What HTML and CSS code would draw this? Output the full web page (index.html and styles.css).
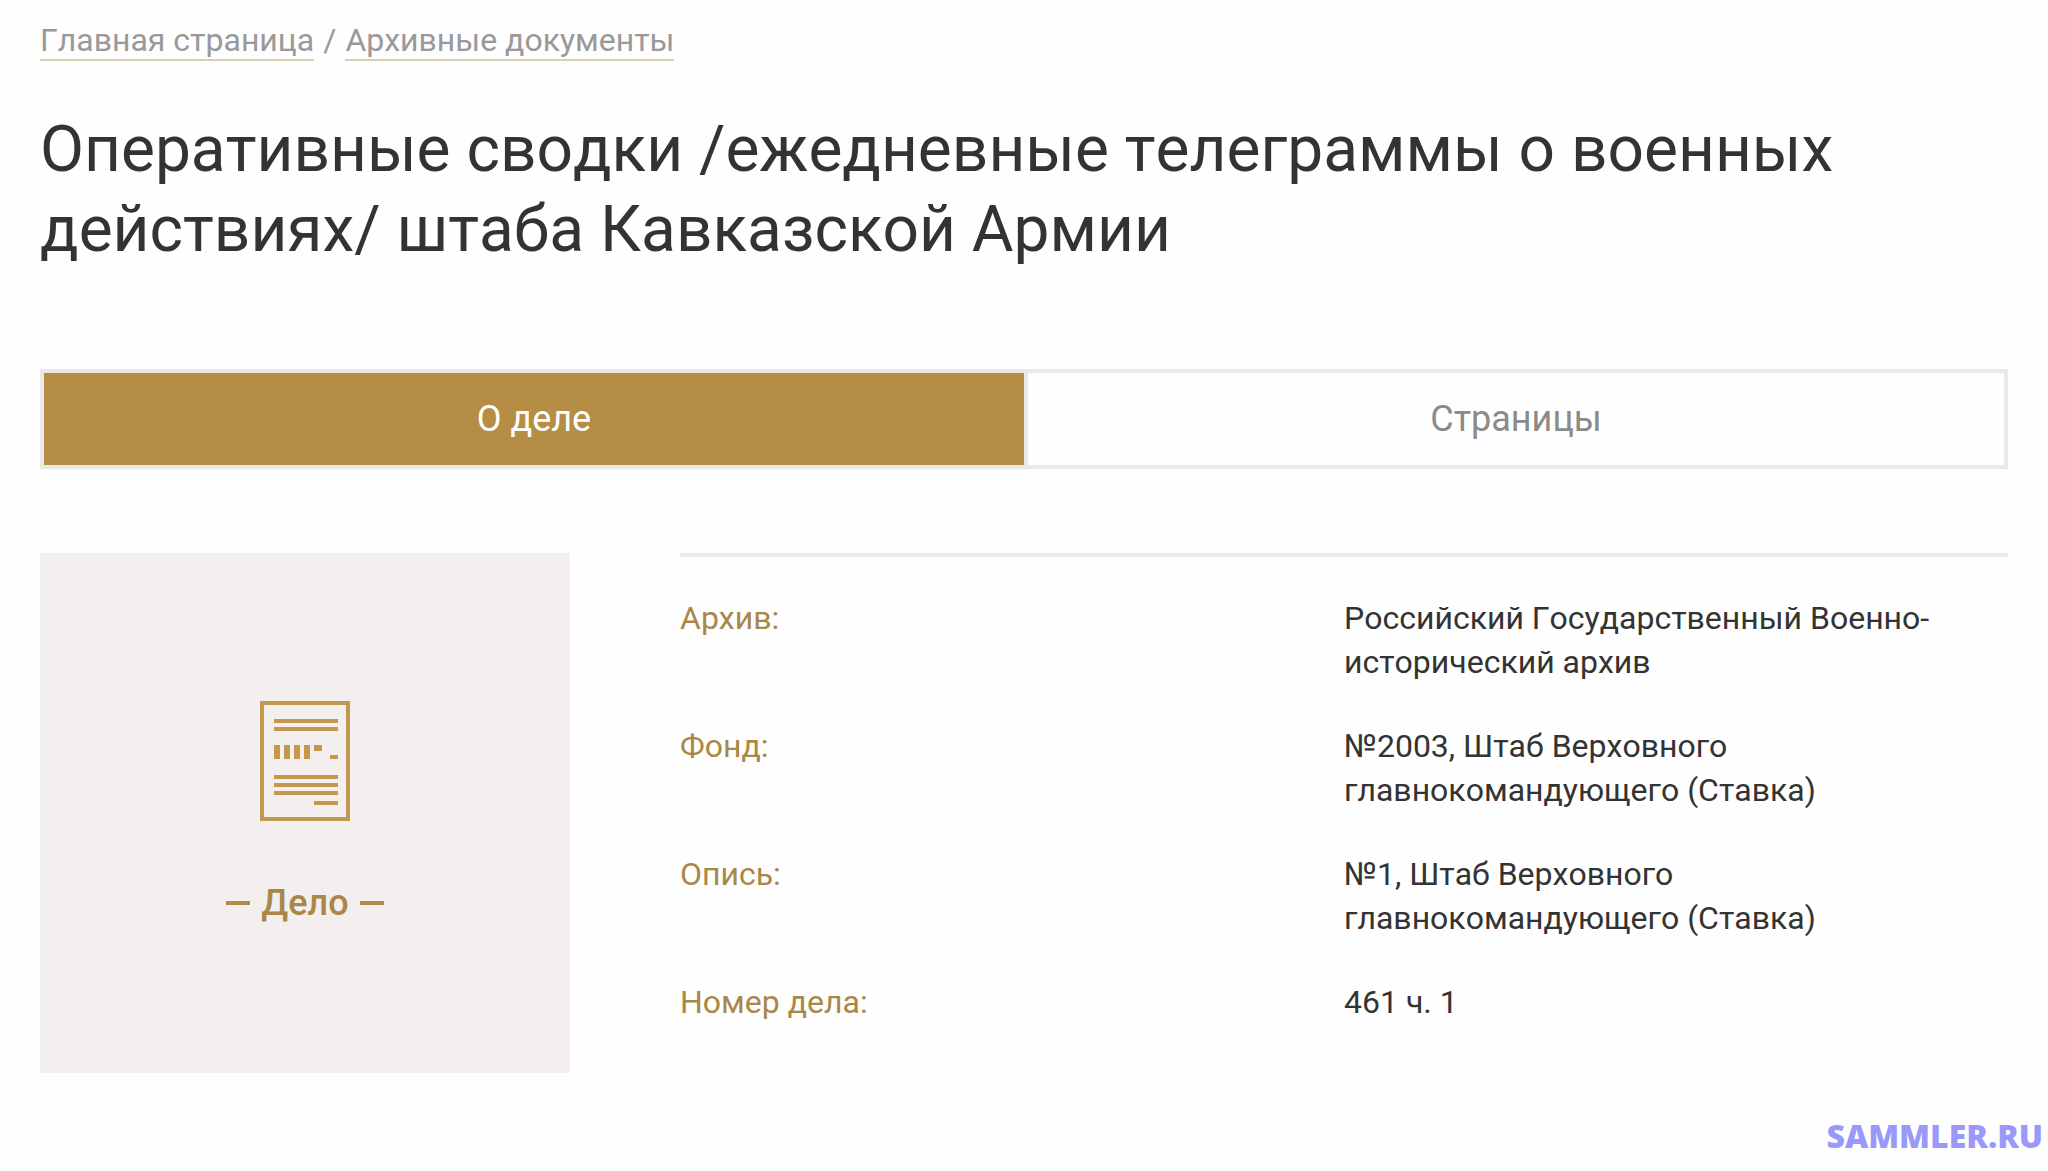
FILE: index.html
```html
<!DOCTYPE html>
<html lang="ru">

<head>
  <meta charset="UTF-8">
  <meta name="viewport" content="width=device-width, initial-scale=1.0">
  <title>Оперативные сводки</title>
  <link rel="stylesheet" href="styles.css">
</head>

<body>
  <main class="page">
    <nav class="breadcrumbs">
      <a href="#">Главная страница</a>
      <span>/</span>
      <a href="#">Архивные документы</a>
    </nav>

    <h1 class="title">Оперативные сводки /ежедневные телеграммы о военных действиях/ штаба Кавказской Армии</h1>

    <div class="tabs">
      <button type="button" class="tab tab-active">О деле</button>
      <button type="button" class="tab">Страницы</button>
    </div>

    <div class="content">
      <div class="card">
        <svg class="card-icon" viewBox="0 0 90 120" aria-hidden="true">
          <rect x="2" y="2" width="86" height="116" fill="none" stroke="#c19850" stroke-width="4" />
          <g fill="#c5974a">
            <rect x="14" y="18" width="64" height="4" />
            <rect x="14" y="26" width="64" height="4" />
            <rect x="14" y="44" width="6" height="14" />
            <rect x="24" y="44" width="6" height="14" />
            <rect x="34" y="44" width="6" height="14" />
            <rect x="44" y="44" width="6" height="14" />
            <rect x="54" y="44" width="8" height="6" />
            <rect x="70" y="54" width="8" height="4" />
            <rect x="14" y="74" width="64" height="4" />
            <rect x="14" y="82" width="64" height="4" />
            <rect x="14" y="90" width="64" height="4" />
            <rect x="54" y="100" width="24" height="4" />
          </g>
        </svg>
        <div class="card-label">Дело</div>
      </div>

      <dl class="info">
        <dt>Архив:</dt>
        <dd>Российский Государственный Военно-исторический архив</dd>
        <dt>Фонд:</dt>
        <dd>№2003, Штаб Верховного главнокомандующего (Ставка)</dd>
        <dt>Опись:</dt>
        <dd>№1, Штаб Верховного главнокомандующего (Ставка)</dd>
        <dt>Номер дела:</dt>
        <dd>461 ч. 1</dd>
      </dl>
    </div>
  </main>
  <footer class="watermark">SAMMLER.RU</footer>
</body>

</html>
```
FILE: styles.css
```css
* {
  box-sizing: border-box;
}

body {
  margin: 0;
  background-color: #fefefe;
  color: #333;
  font-family: Roboto, sans-serif;
  font-size: 32px;
  font-kerning: none;
  line-height: 44px;
}

.page {
  padding: 20px 40px 0;
}

.breadcrumbs {
  display: flex;
  gap: 9px;
  line-height: 40px;
  color: #999;
}

.breadcrumbs a {
  height: 41px;
  color: #999;
  text-decoration: none;
  border-bottom: 2px solid #d5d1b2;
}

.title {
  margin: 49px 0 99px;
  font-size: 64px;
  font-weight: 400;
  line-height: 80px;
}

.tabs {
  display: flex;
  border: 4px solid #eae9e9;
}

.tab {
  width: 50%;
  padding: 24px;
  border: 0;
  background-color: #fefefe;
  color: #8a8a8a;
  font-family: inherit;
  font-size: 36px;
  line-height: 44px;
  cursor: pointer;
}

.tab + .tab {
  border-left: 4px solid #eae9e9;
}

.tab-active {
  background-color: #b58d45;
  color: #fff;
}

.content {
  display: grid;
  grid-template-columns: 530fr 1328fr;
  gap: 110px;
  margin-top: 84px;
}

.card {
  display: flex;
  flex-direction: column;
  align-items: center;
  justify-content: center;
  gap: 60px;
  min-height: 520px;
  background-color: #f2efee;
}

.card-icon {
  width: 90px;
  height: 120px;
}

.card-label {
  display: flex;
  align-items: center;
  gap: 11px;
  color: #a98748;
  font-size: 36px;
  font-weight: 500;
}

.card-label::before,
.card-label::after {
  content: "";
  width: 24px;
  height: 4px;
  background-color: #b08d4c;
}

.info {
  display: grid;
  grid-template-columns: 1fr 1fr;
  align-content: start;
  row-gap: 40px;
  margin: 0;
  padding-top: 39px;
  border-top: 4px solid #eae9e9;
}

.info dt {
  color: #a98748;
}

.info dd {
  margin: 0;
}

.watermark {
  margin-top: 41px;
  padding-right: 5px;
  color: #9a99fb;
  font-family: "Open Sans", sans-serif;
  font-size: 32px;
  font-weight: 800;
  text-align: right;
}
```
